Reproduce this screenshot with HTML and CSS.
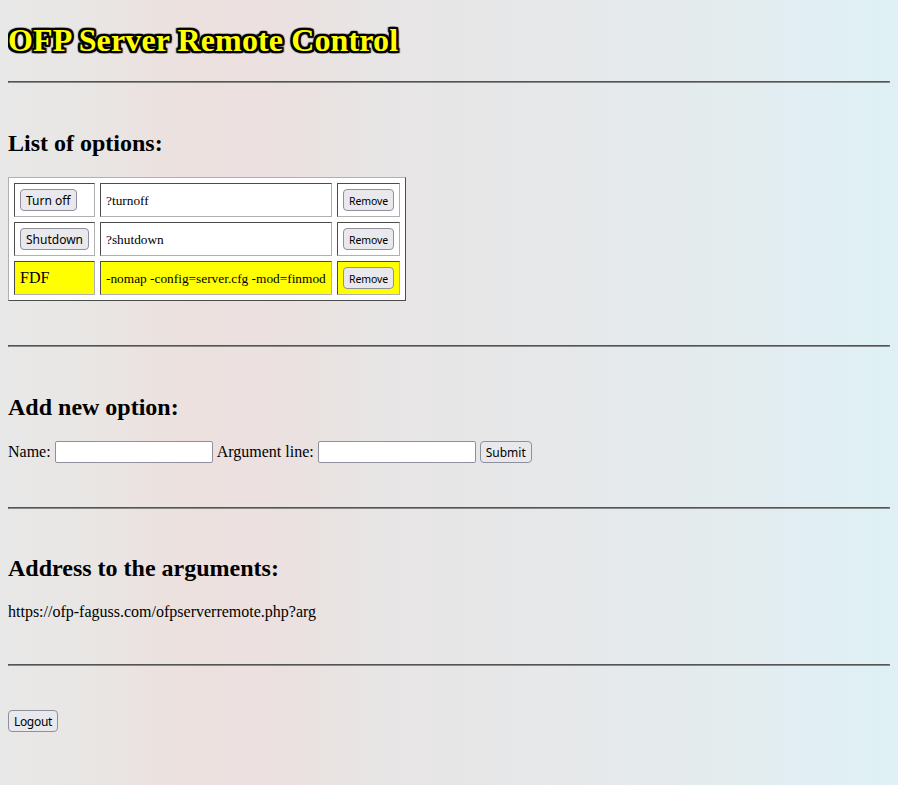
FILE: index.html
```html
<!DOCTYPE html>
<html lang="en">
<head>
<meta charset="utf-8">
<title>OFP Server Remote Control</title>
<link rel="stylesheet" href="styles.css">
</head>
<body>
<h1>OFP Server Remote Control</h1>
<hr>
<section class="options">
<h2>List of options:</h2>
<table>
<tr><td><button>Turn off</button></td><td class="args">?turnoff</td><td><button class="small">Remove</button></td></tr>
<tr><td><button>Shutdown</button></td><td class="args">?shutdown</td><td><button class="small">Remove</button></td></tr>
<tr class="active"><td>FDF</td><td class="args">-nomap -config=server.cfg -mod=finmod</td><td><button class="small">Remove</button></td></tr>
</table>
</section>
<hr>
<section class="add">
<h2>Add new option:</h2>
<form class="row"><label for="name">Name:</label><input id="name" type="text"><label for="arg">Argument line:</label><input id="arg" type="text"><button type="button">Submit</button></form>
</section>
<hr>
<section class="address">
<h2>Address to the arguments:</h2>
<p>https://ofp-faguss.com/ofpserverremote.php?arg</p>
</section>
<hr>
<section class="logout"><button>Logout</button></section>
</body>
</html>
```
FILE: styles.css
```css
* { box-sizing: border-box; }
html { min-height: 100%; background: linear-gradient(to right, #e8e8e8 0%, #e8e7e5 7%, #ece1df 20%, #ede0e0 26%, #ebe1e0 33%, #e8e5e5 41%, #e7e7e8 55%, #e5eaec 70%, #e3ecee 83%, #e1eef4 89%, #dff1f5 100%); }
body { margin: 0 8px; padding-top: 22px; font: 16px/18px "Liberation Serif", serif; color: #000; }
h1 { margin: 0 0 22px; font-size: 32px; line-height: 37px; letter-spacing: 0.12px; color: #ff0; text-shadow: 1px 0 1px #000, -1px 0 1px #000, 0 1px 1px #000, 0 -1px 1px #000, 2px 0 1px #000, -2px 0 1px #000, 0 2px 1px #000, 0 -2px 1px #000, 1px 2px 1px #000, -1px 2px 1px #000, 1px -2px 1px #000, -1px -2px 1px #000, 2px 1px 1px #000, -2px 1px 1px #000, 2px -1px 1px #000, -2px -1px 1px #000, 2px 2px 1px #000, -2px 2px 1px #000, 2px -2px 1px #000, -2px -2px 1px #000; }
h2 { margin: 0; font-size: 24px; line-height: 27px; }
hr { height: 2px; margin: 0; border: 1px solid; border-color: #555 #888 #888 #555; }
section { padding-top: 47px; }
.options { height: 262px; }
.add { height: 160px; }
.address { height: 155px; padding-top: 46px; }
.logout { padding-top: 44px; }
table { margin-top: 20px; width: 398px; border: 1px solid; border-color: #b0b0b0 #4c4c4c #4c4c4c #b0b0b0; border-spacing: 5px; background: #fff; }
td { height: 34px; padding: 5px; border: 1px solid; border-color: #4c4c4c #b0b0b0 #b0b0b0 #4c4c4c; }
td:first-child { width: 81px; }
td:last-child { width: 63px; }
.args { padding-top: 7px; font-size: 13.33px; white-space: nowrap; }
.active td { background: #ff0; }
button { display: block; height: 22px; padding: 1px 5px 0; border: 1px solid #8f8f9d; border-radius: 4px; background: #e9e9ed; color: #000; font: 12px/19px "Noto Sans", sans-serif; }
.small { width: 51px; padding: 2px 0 0; font-size: 10.5px; letter-spacing: -0.1px; }
.logout button { width: 50px; padding: 1px 0 0; letter-spacing: -0.3px; }
.row { display: flex; align-items: center; gap: 4px; margin-top: 20px; }
input { width: 158px; height: 22px; padding: 1px 2px; border: 1px solid #8f8f9d; border-radius: 2px; background: #fff; }
p { margin: 21px 0 0; }
```
